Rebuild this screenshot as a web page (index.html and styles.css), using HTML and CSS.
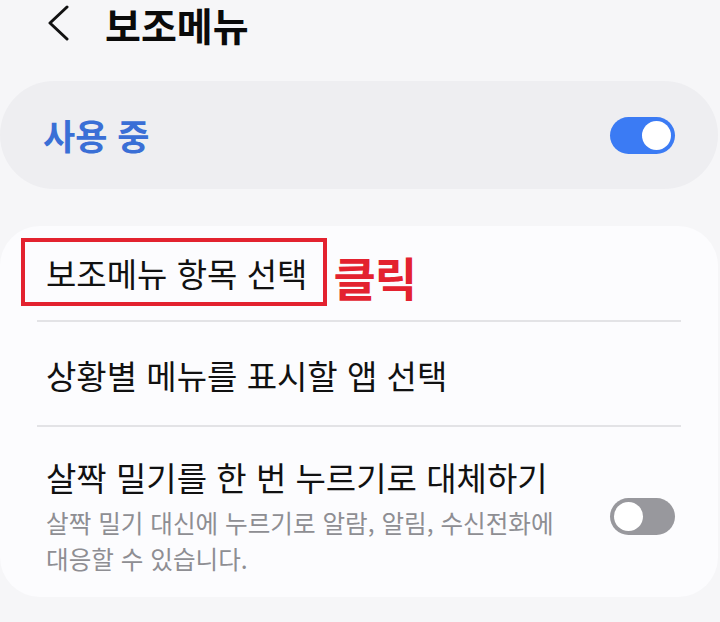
FILE: index.html
```html
<!DOCTYPE html>
<html lang="ko">
<head>
<meta charset="utf-8">
<link rel="stylesheet" href="styles.css">
</head>
<body>
<header class="header">
  <svg class="back" width="24" height="36" viewBox="0 0 24 36"><polyline points="20,2 3,18 20,34" fill="none" stroke="#111" stroke-width="3" stroke-linecap="round" stroke-linejoin="round"/></svg>
  <h1 class="title">보조메뉴</h1>
</header>
<section class="master">
  <span class="master-label">사용 중</span>
  <span class="toggle toggle-on"><span class="knob"></span></span>
</section>
<section class="card">
  <div class="row row-first">
    <span class="boxed">보조메뉴 항목 선택</span>
    <span class="click">클릭</span>
  </div>
  <div class="divider"></div>
  <div class="row row-second">
    <span class="item-title">상황별 메뉴를 표시할 앱 선택</span>
  </div>
  <div class="divider"></div>
  <div class="row row-third">
    <div class="texts">
      <div class="item-title">살짝 밀기를 한 번 누르기로 대체하기</div>
      <div class="item-sub">살짝 밀기 대신에 누르기로 알람, 알림, 수신전화에<br>대응할 수 있습니다.</div>
    </div>
    <span class="toggle toggle-off"><span class="knob"></span></span>
  </div>
</section>
</body>
</html>
```
FILE: styles.css
```css
html, body {
  margin: 0;
  padding: 0;
}
body {
  width: 720px;
  height: 622px;
  overflow: hidden;
  background: #f6f6f8;
  font-family: "Noto Sans CJK KR", "Noto Sans", sans-serif;
  color: #111;
}
.header {
  height: 48px;
  display: flex;
  align-items: center;
  padding-left: 47px;
  gap: 34px;
}
.back {
  display: block;
  margin-top: -2px;
}
.title {
  margin: 0;
  font-size: 39px;
  font-weight: 700;
  line-height: 48px;
  color: #0a0a0a;
}
.master {
  margin-top: 33px;
  width: 718px;
  height: 108px;
  box-sizing: border-box;
  border-radius: 54px;
  background: #eeeef1;
  display: flex;
  align-items: center;
  justify-content: space-between;
  padding: 0 43px 0 43px;
}
.master-label {
  font-size: 35px;
  font-weight: 700;
  color: #3a6fd6;
  line-height: 44px;
}
.toggle {
  width: 65px;
  height: 37px;
  border-radius: 19px;
  box-sizing: border-box;
  display: flex;
  align-items: center;
  padding: 0 4px;
  flex-shrink: 0;
}
.toggle .knob {
  width: 29px;
  height: 29px;
  border-radius: 50%;
  background: #ffffff;
}
.toggle-on {
  background: #3b7bf4;
  justify-content: flex-end;
}
.toggle-off {
  background: #98989d;
  justify-content: flex-start;
}
.card {
  margin-top: 37px;
  width: 718px;
  height: 371px;
  box-sizing: border-box;
  background: #fcfcfe;
  border-radius: 40px;
  overflow: hidden;
}
.row {
  display: flex;
  align-items: center;
}
.row-first {
  padding: 12px 0 14px 21px;
}
.boxed {
  border: 4px solid #e3222f;
  padding: 11px 16px 9px 21px;
  font-size: 33px;
  line-height: 40px;
  color: #111;
}
.click {
  margin-left: 6px;
  font-size: 46px;
  font-weight: 700;
  color: #e3222f;
  line-height: 52px;
  margin-top: 8px;
  letter-spacing: -1px;
}
.divider {
  height: 2px;
  margin: 0 37px;
  background: #e3e3e6;
}
.item-title {
  font-size: 33px;
  line-height: 40px;
  color: #111;
}
.row-second {
  padding: 33px 0 30px 46px;
}
.row-third {
  padding: 30px 43px 0 46px;
  justify-content: space-between;
  align-items: center;
}
.item-sub {
  margin-top: 7px;
  font-size: 24.6px;
  line-height: 36px;
  color: #8e8e93;
}
```
